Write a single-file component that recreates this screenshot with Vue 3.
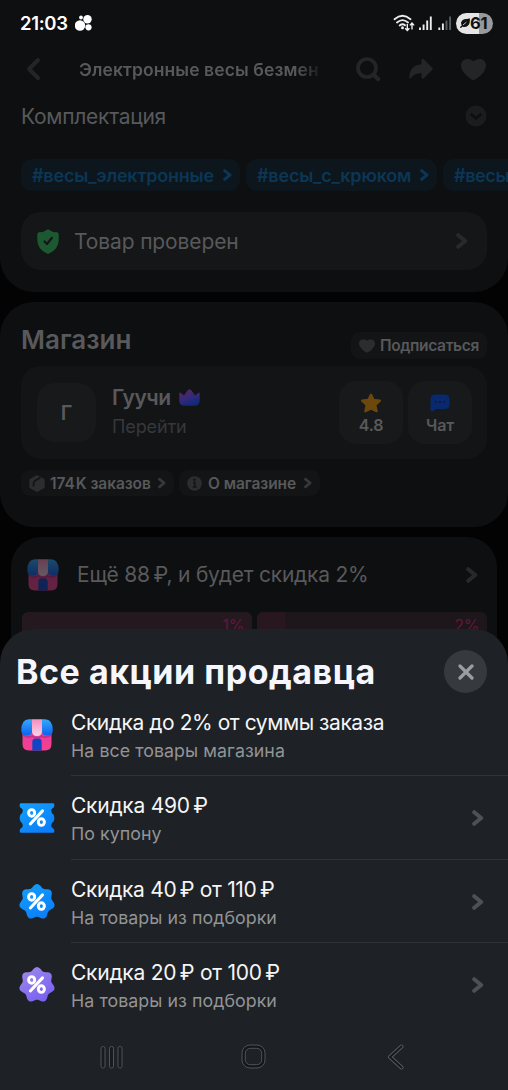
<script setup>
const promos = [
  { icon: 'shop', title: 'Скидка до 2% от суммы заказа', note: 'На все товары магазина', w: 'a', link: false },
  { icon: 'coupon', title: 'Скидка 490\u2009₽', note: 'По купону', w: 'b', link: true },
  { icon: 'blue', title: 'Скидка 40\u2009₽ от 110\u2009₽', note: 'На товары из подборки', w: 'c', link: true },
  { icon: 'violet', title: 'Скидка 20\u2009₽ от 100\u2009₽', note: 'На товары из подборки', w: 'd', link: true },
]

// Seven-lobed badge outline around the centre of a 36×36 box
const badge = (() => {
  const points = []
  for (let i = 0; i < 140; i++) {
    const t = (i / 140) * Math.PI * 2
    const r = 16.3 + 1.6 * Math.cos(7 * t)
    points.push(`${(18 + r * Math.sin(t)).toFixed(2)} ${(18 - r * Math.cos(t)).toFixed(2)}`)
  }
  return `M${points.join('L')}Z`
})()
</script>

<template>
  <div class="screen">
    <svg class="defs" width="0" height="0">
      <defs>
        <linearGradient id="gPink" x1="0" y1="0" x2="0" y2="1"><stop offset="0" stop-color="#e0409c" /><stop offset="1" stop-color="#f83f8f" /></linearGradient>
        <linearGradient id="gAwn" x1="0" y1="0" x2="0" y2="1"><stop offset="0" stop-color="#35a8fa" /><stop offset="1" stop-color="#0b62f0" /></linearGradient>
        <linearGradient id="gStripe" x1="0" y1="0" x2="0" y2="1"><stop offset="0" stop-color="#f58fc0" /><stop offset="1" stop-color="#fad3e6" /></linearGradient>
        <linearGradient id="gBlue" x1="0" y1="0" x2=".6" y2="1"><stop offset="0" stop-color="#14a0fb" /><stop offset="1" stop-color="#0a80fa" /></linearGradient>
        <linearGradient id="gViolet" x1="0" y1="0" x2=".6" y2="1"><stop offset="0" stop-color="#a08bea" /><stop offset="1" stop-color="#7a62f0" /></linearGradient>
        <linearGradient id="gCrown" x1=".3" y1="0" x2=".7" y2="1"><stop offset="0" stop-color="#54285f" /><stop offset=".5" stop-color="#35297a" /><stop offset="1" stop-color="#082a78" /></linearGradient>
        <symbol id="shop" viewBox="0 0 32 32">
          <path d="M1.500 12H30.500V25Q30.500 31.500 24 31.500H8Q1.500 31.500 1.500 25Z" fill="url(#gPink)" />
          <path d="M2 15Q7 19 11 16Q16 20 21 16Q25 19 30 15V17Q25 20.500 21 18Q16 21 11 18Q7 20.500 2 17Z" fill="#a82583" opacity=".55" />
          <path d="M11.300 31.500V23Q11.300 19.500 14.500 19.500H17.500Q20.700 19.500 20.700 23V31.500Z" fill="#1245c4" />
          <path d="M8 .3H11V12Q11 16.500 6 16.500Q.3 16.500 .3 11.500Q.3 .3 8 .3Z" fill="url(#gAwn)" />
          <path d="M21 .3H24Q31.700 .3 31.700 11.500Q31.700 16.500 26 16.500Q21 16.500 21 12Z" fill="url(#gAwn)" />
          <path d="M11 .3H21V12Q21 17 16 17T11 12Z" fill="url(#gStripe)" />
        </symbol>
        <symbol id="percent" viewBox="0 0 20 20">
          <g fill="none" stroke="#fff" stroke-linecap="round"><ellipse cx="4.900" cy="5.200" rx="3.200" ry="3.500" stroke-width="3.100" /><ellipse cx="15.100" cy="14.800" rx="3.200" ry="3.500" stroke-width="3.100" /><path d="M16.300 3L3.500 16.800" stroke-width="3.200" /></g>
        </symbol>
        <symbol id="heart" viewBox="0 0 24 20"><path d="M12 20C10 20 0 13 0 6.300C0 2.500 2.800 0 6.200 0C8.800 0 10.800 1 12 2.500C13.200 1 15.200 0 17.800 0C21.200 0 24 2.500 24 6.300C24 13 14 20 12 20Z" /></symbol>
        <symbol id="chev" viewBox="0 0 12 16"><path d="M2.200 2.200L9.200 8L2.200 13.800" fill="none" stroke="currentColor" stroke-width="4" stroke-linecap="round" stroke-linejoin="round" /></symbol>
      </defs>
    </svg>

    <section class="card product">
      <div class="status">
        <b class="time">21:03</b>
        <svg class="dots" width="17" height="16" viewBox="0 0 17 16" fill="#fff"><circle cx="5" cy="10.500" r="5.200" /><circle cx="12.500" cy="4.200" r="4.200" /><circle cx="13.500" cy="12.300" r="3.100" /><circle cx="6" cy="2.500" r="1.900" /></svg>
        <svg class="signal" width="60" height="18" viewBox="0 0 60 18">
          <g fill="none" stroke="#ececec" stroke-width="1.800" stroke-linecap="round"><path d="M1.500 5.200Q9.500 -1.600 17.500 5.200M4 8.500Q9.500 3.700 15 8.500M6.700 11.500Q9.500 9.200 12 11.300" /></g>
          <circle cx="9.500" cy="13.800" r="1.500" fill="#ececec" />
          <path d="M14.300 10V16M12.200 14.200L14.300 16.500L16.400 14.200M19 15.500V9.300M16.900 11.400L19 9.100L21.100 11.400" fill="none" stroke="#eee" stroke-width="1.400" />
          <path d="M27 13.500V16M30.600 10.500V16M34.200 6.500V16M37.800 2.500V16M46.300 13.500V16M49.900 9.500V16" stroke="#ececec" stroke-width="1.900" />
          <path d="M53.500 6.500V16M57.100 2.500V16" stroke="#5b5c5e" stroke-width="1.900" />
        </svg>
        <div class="battery">
          <svg width="10" height="10" viewBox="0 0 10 10"><path d="M9.800 .3C8.500 1.500 3 .3 1.500 3.400C.5 5.400 1.500 7.500 2.700 8.700C7.800 9.700 10.400 7 9.800 .3Z" fill="#111" /><path d="M3 7L6.300 4.200" stroke="#e5e5e5" stroke-width=".8" /><path d="M.3 9.700L3 7.300" stroke="#111" stroke-width="1.400" /></svg>
          <b>61</b>
        </div>
      </div>

      <div class="header">
        <svg width="16" height="24" viewBox="0 0 16 24"><path d="M13 3L4 12L13 21" fill="none" stroke="#242527" stroke-width="4" stroke-linecap="round" stroke-linejoin="round" /></svg>
        <b class="name">Электронные весы безмен</b>
        <svg class="search" width="25" height="25" viewBox="0 0 25 25" fill="none" stroke="#242527" stroke-linecap="round"><circle cx="11" cy="11" r="9" stroke-width="3.700" /><path d="M18 18L22 22" stroke-width="4.500" /></svg>
        <svg class="share" width="25" height="23" viewBox="0 0 26 23" fill="#242527"><path d="M15 .5Q13 -.5 13 3V6C4 6.500 .7 12 .3 20Q.5 22 2 20Q6 15.500 13 15.500V19Q13 22.500 15.500 20.500L24 12Q25.500 10.700 24 9.500Z" /></svg>
        <svg class="fav" width="25" height="21" fill="#242527"><use href="#heart" /></svg>
      </div>

      <div class="kit">
        <span>Комплектация</span>
        <svg width="22" height="22" viewBox="0 0 22 22"><circle cx="11" cy="11" r="10.500" fill="#1b1c1e" /><path d="M6.500 9.500L11 13.500L15.500 9.500" fill="none" stroke="#0d0e10" stroke-width="2.600" stroke-linecap="round" stroke-linejoin="round" /></svg>
      </div>

      <div class="tags">
        <span class="tag t1"><b>#весы_электронные</b><svg width="9" height="12"><use href="#chev" /></svg></span>
        <span class="tag t2"><b>#весы_с_крюком</b><svg width="9" height="12"><use href="#chev" /></svg></span>
        <span class="tag t3"><b>#весы</b></span>
      </div>

      <div class="checked">
        <svg width="22" height="25" viewBox="0 0 22 25"><path d="M11 .3Q15 3.300 20 3.300Q21.700 3.500 21.700 5.500V11Q21.500 20.500 12 24.500Q11 25 10 24.500Q.5 20.500 .3 11V5.500Q.3 3.500 2 3.300Q7 3.300 11 .3Z" fill="#1c5931" /><path d="M7.500 12.500L10 15L14.800 9" fill="none" stroke="#151617" stroke-width="2.300" stroke-linecap="round" stroke-linejoin="round" /></svg>
        <span>Товар проверен</span>
        <svg class="go" width="12" height="16"><use href="#chev" /></svg>
      </div>
    </section>

    <section class="card store">
      <div class="storehead">
        <b class="h">Магазин</b>
        <span class="sub"><svg width="16" height="14" fill="#2c2d2f" viewBox="0 0 24 20"><use href="#heart" width="24" height="20" /></svg><b>Подписаться</b></span>
      </div>
      <div class="shopbox">
        <div class="avatar">Г</div>
        <div class="who">
          <div class="brand"><b>Гуучи</b><svg width="21" height="17" viewBox="0 0 21 17"><path d="M.3 5Q.5 2.500 2.200 4.300L5 6.500L8.300 1.800Q10.500 -1.200 12.700 1.800L16 6.500L18.800 4.300Q20.500 2.500 20.700 5V12Q20.500 16.800 15.500 16.800H5.500Q.5 16.800 .3 12Z" fill="url(#gCrown)" /></svg></div>
          <span>Перейти</span>
        </div>
        <div class="tile">
          <svg width="22" height="20" viewBox="0 0 22 20"><path d="M11 1.700L13.600 7L19.900 7.700L15.300 12L16.600 18.200L11 15.500L5.400 18.200L6.700 12L2.100 7.700L8.400 7Z" fill="#6d480d" stroke="#6d480d" stroke-width="2.300" stroke-linejoin="round" /></svg>
          <b>4.8</b>
        </div>
        <div class="tile chat">
          <svg width="20" height="18" viewBox="0 0 20 18"><path d="M5 .5H15Q19.500 .5 19.500 5V10.500Q19.500 15 15 15H6L2.500 17.500Q.7 18 .5 16V5Q.5 .5 5 .5Z" fill="#08296d" /><g fill="#101a31"><circle cx="6" cy="8" r="1" /><circle cx="10" cy="8" r="1" /><circle cx="14" cy="8" r="1" /></g></svg>
          <b>Чат</b>
        </div>
      </div>
      <div class="pills">
        <span class="pill p1">
          <svg width="16" height="17" viewBox="0 0 16 17"><path d="M7 .6Q8 .1 9 .6L14.700 3.800Q15.700 4.500 15.700 5.700V11.500Q15.700 12.700 14.700 13.300L9 16.400Q8 16.900 7 16.400L1.300 13.300Q.3 12.700 .3 11.500V5.700Q.3 4.500 1.300 3.800Z" fill="#2c2d2f" /><path d="M11.500 2.500L6 5.800Q4.500 7 4.500 9V11.500" fill="none" stroke="#131416" stroke-width="1.800" /></svg>
          <b>174&#8202;K заказов</b><svg class="chev" width="8" height="12"><use href="#chev" /></svg>
        </span>
        <span class="pill p2">
          <svg width="15" height="15" viewBox="0 0 15 15"><circle cx="7.500" cy="7.500" r="7.300" fill="#2c2d2f" /><path d="M6 6.500H7.800V11M5.800 11H9.500" fill="none" stroke="#131416" stroke-width="1.600" /><circle cx="7.500" cy="3.800" r="1.200" fill="#131416" /></svg>
          <b>О магазине</b><svg class="chev" width="8" height="12"><use href="#chev" /></svg>
        </span>
      </div>
    </section>

    <section class="card bonus">
      <div class="bonusrow">
        <svg class="faded" width="32" height="32"><use href="#shop" /></svg>
        <span>Ещё 88&#8201;₽, и будет скидка 2%</span>
        <svg class="go" width="12" height="16"><use href="#chev" /></svg>
      </div>
      <div class="bars"><div class="bar full">1%</div><div class="bar part">2%</div></div>
    </section>

    <section class="sheet">
      <div class="sheethead">
        <h1>Все акции продавца</h1>
        <div class="close"><svg width="16" height="16" viewBox="0 0 16 16"><path d="M2 2L14 14M14 2L2 14" stroke="#9b9da0" stroke-width="3.200" stroke-linecap="round" /></svg></div>
      </div>
      <div v-for="p in promos" :key="p.w" class="promo">
        <div class="pic">
          <svg v-if="p.icon === 'shop'" width="32" height="32"><use href="#shop" /></svg>
          <svg v-else width="36" height="36" viewBox="0 0 36 36">
            <path v-if="p.icon === 'coupon'" d="M2 3.300H34Q35.300 3.300 35.300 4.500V6Q35.300 7.500 34 8Q31.500 9.500 32.500 12Q33 13.500 34.500 14.500Q35.300 15.500 35.300 18T34.500 21.500Q33 22.500 32.500 24Q31.500 27 34 28.200Q35.300 29 35.300 30.500V31.500Q35.300 32.800 34 32.800H2Q.7 32.800 .7 31.500V30.500Q.7 29 2 28.200Q4.500 27 3.500 24Q3 22.500 1.500 21.500Q.7 20.500 .7 18T1.500 14.500Q3 13.500 3.500 12Q4.500 9.500 2 8Q.7 7.500 .7 6V4.500Q.7 3.300 2 3.300Z" fill="url(#gBlue)" />
            <path v-else :d="badge" :fill="p.icon === 'blue' ? 'url(#gBlue)' : 'url(#gViolet)'" />
            <use href="#percent" x="8" y="8" width="19" height="19" />
          </svg>
        </div>
        <div class="copy">
          <div class="texts"><div :class="['title', p.w]">{{ p.title }}</div><div class="note">{{ p.note }}</div></div>
          <svg v-if="p.link" class="arrow" width="12" height="16"><use href="#chev" /></svg>
        </div>
      </div>
      <div class="nav">
        <svg width="24" height="25" viewBox="0 0 24 25" fill="#191b1f" stroke="#505255"><rect x="1" y="1.500" width="4" height="21.500" rx="1.800" /><rect x="9.500" y="1.500" width="4" height="21.500" rx="1.800" /><rect x="18" y="1.500" width="4" height="21.500" rx="1.800" /></svg>
        <svg class="home" width="26" height="26" viewBox="0 0 26 26" fill="none" stroke="#505255"><rect x="2.500" y="2.500" width="20" height="20" rx="6.500" stroke="#15171a" stroke-width="3" /><rect x="1" y="1" width="23" height="23" rx="8" /><rect x="4.300" y="4.300" width="16.400" height="16.400" rx="5" /></svg>
        <svg width="18" height="26" viewBox="0 0 18 26" fill="none" stroke-linejoin="round" stroke-linecap="round"><path d="M14.500 2.500L3 13L14.500 23.500" stroke="#5a5c5f" stroke-width="4" /><path d="M14.500 2.500L3 13L14.500 23.500" stroke="#16181b" stroke-width="2.200" /></svg>
      </div>
    </section>
  </div>
</template>

<style>
html, body { background: #030304; overflow: hidden; }
</style>
<style scoped>
* { box-sizing: border-box; }
.screen { width: 508px; height: 1090px; overflow: hidden; display: flex; flex-direction: column; background: #030304; font-family: Inter, "Noto Sans", sans-serif; color: #58595b; }
.defs { position: absolute; }
svg { flex: none; display: block; }
b { font-weight: 600; white-space: nowrap; }
span { white-space: nowrap; }
.card { flex: none; background: #0e0f11; border-radius: 34px; }
.product { height: 292px; border-radius: 0 0 34px 34px; padding: 0 21px; }
.status { height: 46px; display: flex; align-items: center; margin: 0 -6px 0 -1px; }
.time { color: #fff; font-size: 18.500px; width: 55px; letter-spacing: -.3px; }
.signal { margin: 0 3px 0 auto; }
.battery { width: 37px; height: 21px; border-radius: 11px; display: flex; align-items: center; padding-left: 4px; background: linear-gradient(90deg, #e5e5e5 61%, #98999a 61%); color: #101113; font-size: 16.500px; letter-spacing: -.3px; }
.battery b { font-weight: 700; }
.header { height: 46px; display: flex; align-items: center; padding-left: 4px; }
.name { font-size: 17.500px; letter-spacing: .1px; width: 241px; margin-left: 38px; margin-right: 36px; overflow: hidden; height: 26px; line-height: 28px; -webkit-mask-image: linear-gradient(90deg, #000 90%, transparent 102%); mask-image: linear-gradient(90deg, #000 90%, transparent 102%); }
.share { margin-left: 28px; }
.fav { margin-left: 27px; }
.kit { height: 48px; display: flex; align-items: center; justify-content: space-between; font-size: 21px; letter-spacing: -.28px; }
.tags { margin-top: 19px; display: flex; gap: 6px; width: 487px; overflow: hidden; }
.tag { flex: none; height: 32px; border-radius: 11px; background: #0c161c; color: #0b3656; font-size: 18px; letter-spacing: -.22px; display: flex; align-items: center; justify-content: space-between; padding: 0 8px 0 11px; }
.t1 { width: 219px; }
.t2 { width: 191px; }
.t3 { width: 65px; border-radius: 11px 0 0 11px; letter-spacing: -.4px; padding-right: 0; }
.checked { margin-top: 21px; height: 58px; border-radius: 20px; background: #151617; display: flex; align-items: center; padding: 0 19px 0 16px; font-size: 21px; letter-spacing: -.13px; }
.checked span { margin-left: 15px; }
.go { margin-left: auto; color: #29292b; }
.store { margin-top: 10px; height: 225px; padding: 0 21px; }
.storehead { height: 64px; display: flex; align-items: flex-end; justify-content: space-between; }
.h { font-size: 26px; line-height: 30px; margin-bottom: 11px; }
.sub { width: 136px; height: 27px; margin-bottom: 7px; border-radius: 9px; background: #131416; display: flex; align-items: center; gap: 5px; padding-left: 8px; font-size: 15.500px; letter-spacing: -.35px; line-height: 25px; }
.shopbox { height: 93px; border-radius: 20px; background: #131416; display: flex; align-items: center; padding: 0 15px 0 16px; }
.avatar { width: 59px; height: 59px; border-radius: 18px; background: #17191a; display: flex; align-items: center; justify-content: center; font-size: 20px; font-weight: 600; }
.who { margin: -3px 0 0 16px; font-size: 18px; color: #37383a; }
.who > span { display: block; line-height: 27px; letter-spacing: -.1px; }
.brand { display: flex; align-items: center; gap: 8px; font-size: 21px; line-height: 31px; letter-spacing: -.4px; color: #58595b; }
.tile { width: 64px; height: 63px; margin-left: auto; border-radius: 17px; background: #17191a; display: flex; flex-direction: column; align-items: center; padding-top: 12px; font-size: 16px; letter-spacing: -.15px; gap: 2px; }
.tile b { line-height: 21px; }
.tile.chat { margin-left: 5px; }
.tile.chat svg { margin: 1px 0; }
.pills { margin-top: 11px; display: flex; gap: 5px; }
.pill { height: 26px; border-radius: 9px; background: #131416; display: flex; align-items: center; padding: 0 8px; font-size: 15.500px; letter-spacing: -.08px; }
.pill b { margin-left: 5px; }
.p2 b { margin-left: 6px; }
.p1 { width: 153px; }
.p2 { width: 141px; }
.chev { margin-left: auto; color: #37383a; }
.bonus { margin: 10px 11px 0; height: 126px; border-radius: 30px 30px 0 0; padding: 0 11px; }
.bonusrow { height: 75px; display: flex; align-items: center; padding: 0 8px 0 5px; font-size: 21px; letter-spacing: -.22px; }
.bonusrow span { margin-left: 18px; }
.faded { opacity: .38; }
.bars { display: grid; grid-template-columns: 230px 230px; gap: 5px; }
.bar { height: 26px; border-radius: 6px; background: #1f161b; color: #64173d; font-size: 16px; letter-spacing: -.4px; line-height: 26px; text-align: right; padding-right: 8px; }
.full { background: #24191e; }
.part { background: linear-gradient(90deg, #28171e 28px, #1d161a 28px); }
.sheet { flex: none; position: relative; margin-top: -34px; height: 461px; border-radius: 34px 34px 0 0; background: #1e2125; }
.sheethead { height: 64px; display: flex; align-items: flex-start; justify-content: space-between; padding: 21px 21px 0 16px; }
h1 { margin: 0; font-size: 34px; line-height: 43px; letter-spacing: .53px; font-weight: 700; color: #f6f6fc; white-space: nowrap; }
.close { width: 43px; height: 43px; border-radius: 50%; background: #36393e; display: flex; align-items: center; justify-content: center; }
.promo { height: 83.300px; display: flex; }
.pic { width: 71px; display: flex; align-items: center; justify-content: center; padding: 1px 0 0 2px; }
.copy { flex: 1; display: flex; align-items: center; justify-content: space-between; border-bottom: 1px solid #303236; padding-right: 24px; }
.promo:nth-child(5) .copy { border-color: transparent; }
.texts { padding-top: 6px; }
.title { font-size: 21px; line-height: 28px; letter-spacing: -.25px; color: #f5f5f6; white-space: nowrap; }
.title.a { letter-spacing: -.44px; }
.title.c { letter-spacing: -.32px; }
.note { font-size: 17.800px; line-height: 28px; letter-spacing: .06px; color: #929496; white-space: nowrap; }
.arrow { color: #4e5053; margin-top: 2px; }
.nav { height: 50px; margin-top: 6px; display: flex; align-items: center; justify-content: space-between; padding: 0 103px 0 100px; }
.home { margin-right: 3px; }
</style>
